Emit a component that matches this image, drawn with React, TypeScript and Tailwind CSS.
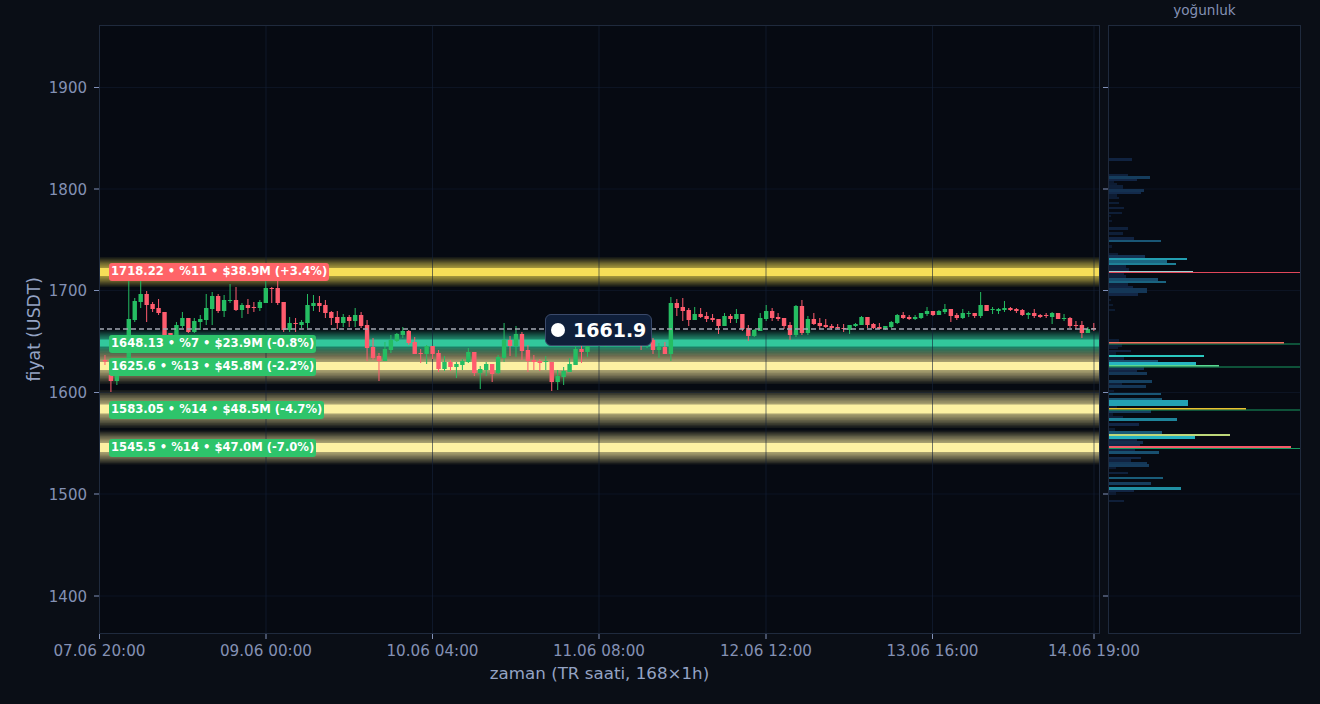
const PLOT_BG = "#060a12";
const GRID = "#14223a";

// every price/time value below is already in page pixels, svg viewBoxes use page coords
const yTicks = [
  { y: 87.5, label: "1900" },
  { y: 189, label: "1800" },
  { y: 290.5, label: "1700" },
  { y: 392.5, label: "1600" },
  { y: 494, label: "1500" },
  { y: 596, label: "1400" },
];

const xTicks = [
  { x: 99.5, label: "07.06 20:00" },
  { x: 266, label: "09.06 00:00" },
  { x: 432.5, label: "10.06 04:00" },
  { x: 599, label: "11.06 08:00" },
  { x: 766, label: "12.06 12:00" },
  { x: 932.5, label: "13.06 16:00" },
  { x: 1094, label: "14.06 19:00" },
];

const bands = [
  { y: 272, core: 4, glow: 15, color: "#f6de58" },
  { y: 343, core: 3.5, glow: 13, color: "#32c79c" },
  { y: 366, core: 4, glow: 18, color: "#fdf1a2" },
  { y: 409, core: 4.5, glow: 19, color: "#fdf1a2" },
  { y: 447.5, core: 4.5, glow: 17, color: "#fdf1a2" },
];

const levelTags = [
  { text: "1718.22 • %11 • $38.9M (+3.4%)", cls: "top-[238px] bg-[#ff6468]" },
  { text: "1648.13 • %7 • $23.9M (-0.8%)", cls: "top-[310px] bg-[#2ec46b]" },
  { text: "1625.6 • %13 • $45.8M (-2.2%)", cls: "top-[333px] bg-[#2ec46b]" },
  { text: "1583.05 • %14 • $48.5M (-4.7%)", cls: "top-[376px] bg-[#2ec46b]" },
  { text: "1545.5 • %14 • $47.0M (-7.0%)", cls: "top-[414px] bg-[#2ec46b]" },
];

// bodyTop, bodyBottom, wickTop, wickBottom, up (1 = green), index starts at 1
const candles: number[][] = [
  [360, 361.5, 355, 365, 0], [375, 381, 375, 392, 0], [375, 381, 375, 385, 1], [360, 372, 358, 374, 0],
  [319, 358, 278, 358, 1], [301, 320, 298, 322, 1], [294, 302, 280, 308, 1], [294, 305, 291, 322, 0],
  [304, 309, 302, 312, 0], [308, 313, 299, 315, 0], [312, 340, 312, 342, 0], [333, 345, 333, 346, 0],
  [325, 338, 322, 345, 1], [318, 326, 312, 328, 1], [318, 332, 318, 333, 0], [321, 332, 318, 333, 1],
  [319, 322, 315, 330, 1], [308, 320, 294, 325, 1], [296, 309, 292, 325, 1], [296, 311, 294, 313, 0],
  [300, 311, 295, 317, 1], [300, 301, 284, 303, 1], [300, 310, 287, 311, 0], [305, 310, 303, 318, 1],
  [305, 308, 299, 314, 0], [307, 308, 302, 312, 0], [302, 308, 300, 311, 1], [288, 303, 280, 303, 1],
  [288, 289, 287, 303, 0], [288, 303, 280, 305, 0], [302, 330, 302, 332, 0], [323, 330, 317, 332, 1],
  [323, 324, 318, 332, 0], [322, 325, 320, 328, 1], [305, 323, 294, 328, 1], [303, 306, 295, 311, 1],
  [303, 306, 296, 312, 0], [305, 313, 300, 318, 0], [312, 318, 311, 325, 0], [317, 323, 311, 329, 0],
  [317, 323, 314, 327, 1], [317, 321, 315, 327, 0], [315, 321, 308, 327, 1], [315, 326, 312, 328, 0],
  [325, 348, 320, 361, 0], [347, 358, 338, 360, 0], [356, 361, 353, 381, 0], [349, 361, 342, 361, 1],
  [340, 350, 335, 353, 1], [334, 341, 333, 342, 1], [331, 335, 327, 338, 1], [331, 343, 330, 345, 0],
  [342, 354, 337, 354, 0], [353, 354, 349, 363, 0], [346, 354, 345, 364, 1], [346, 354, 346, 359, 0],
  [353, 369, 350, 372, 0], [362, 369, 356, 371, 1], [362, 367, 360, 371, 0], [364, 367, 362, 378, 1],
  [361, 365, 359, 370, 1], [352, 362, 348, 363, 1], [352, 373, 352, 376, 0], [369, 373, 366, 389, 1],
  [364, 370, 362, 376, 1], [364, 374, 364, 382, 0], [357, 373, 355, 374, 1], [340, 358, 323, 362, 1],
  [340, 346, 336, 356, 0], [334, 346, 326, 357, 1], [334, 351, 332, 360, 0], [350, 361, 345, 372, 0],
  [360, 362, 355, 370, 0], [361, 363, 359, 371, 0], [361, 362, 356, 370, 1], [362, 382, 362, 391, 0],
  [376, 382, 370, 390, 1], [371, 377, 367, 385, 1], [364, 372, 358, 372, 1], [349, 365, 345, 365, 1],
  [349, 352, 345, 363, 0], [345, 352, 343, 357, 1], [335, 344, 330, 345, 1], [332, 340, 328, 344, 1],
  [335, 343, 332, 347, 1], [330, 338, 326, 342, 0], [328, 336, 325, 340, 0], [330, 340, 326, 344, 1],
  [332, 340, 329, 344, 0], [330, 340, 328, 344, 1], [338, 344, 334, 350, 0], [336, 342, 332, 348, 1],
  [340, 350, 338, 354, 0], [347, 350, 343, 358, 1], [347, 354, 342, 354, 0], [303, 354, 297, 361, 1],
  [303, 308, 299, 316, 0], [307, 311, 298, 321, 0], [310, 320, 308, 326, 0], [314, 320, 307, 320, 1],
  [314, 317, 308, 318, 0], [316, 319, 312, 322, 0], [318, 320, 314, 322, 0], [319, 326, 319, 334, 0],
  [316, 326, 313, 326, 1], [316, 319, 314, 323, 0], [314, 319, 309, 323, 1], [314, 329, 314, 331, 0],
  [328, 336, 325, 341, 0], [330, 336, 329, 337, 1], [318, 331, 313, 331, 1], [311, 319, 305, 321, 1],
  [311, 318, 308, 321, 0], [317, 319, 313, 321, 0], [318, 326, 318, 329, 0], [325, 335, 322, 340, 0],
  [306, 335, 305, 337, 1], [306, 333, 300, 335, 0], [319, 333, 316, 335, 1], [319, 324, 313, 325, 0],
  [323, 326, 318, 329, 0], [325, 327, 319, 328, 0], [326, 328, 324, 330, 0], [327, 328, 324, 329, 0],
  [328, 329, 324, 332, 0], [325, 330, 325, 334, 1], [324, 326, 323, 327, 1], [317, 325, 316, 325, 1],
  [317, 325, 317, 328, 0], [324, 328, 323, 329, 0], [327, 329, 323, 329, 0], [326, 329, 326, 330, 1],
  [322, 327, 321, 328, 1], [315, 323, 314, 324, 1], [315, 318, 312, 319, 0], [317, 319, 315, 320, 0],
  [317, 319, 315, 320, 1], [313, 318, 313, 319, 1], [311, 314, 307, 316, 1], [311, 315, 311, 316, 0],
  [311, 315, 310, 315, 1], [309, 312, 304, 314, 1], [309, 316, 309, 322, 0], [315, 318, 313, 320, 0],
  [313, 318, 309, 319, 1], [313, 314, 311, 317, 1], [313, 316, 313, 318, 0], [305, 316, 292, 318, 1],
  [305, 311, 305, 311, 0], [309, 310, 307, 314, 1], [309, 311, 308, 314, 1], [308, 310, 301, 312, 1],
  [308, 310, 307, 311, 0], [309, 311, 308, 313, 0], [310, 315, 309, 316, 0], [313, 315, 312, 319, 1],
  [313, 316, 309, 318, 0], [315, 317, 314, 318, 0], [315, 316, 313, 318, 0], [313, 317, 312, 324, 1],
  [313, 319, 313, 319, 0], [318, 319, 314, 321, 1], [318, 326, 317, 328, 0], [325, 326, 321, 329, 0],
  [325, 333, 321, 338, 0], [329, 333, 327, 333, 1], [328, 329, 323, 331, 0],
];

// top, height, width
const densityBars: number[][] = [
  [158, 3, 23], [174, 2, 19], [176, 3, 41], [179, 2, 28], [181, 2, 5], [183, 2, 8], [185, 4, 14], [189, 3, 35],
  [192, 2, 32], [194, 3, 8], [197, 2, 10], [202, 2, 10], [207, 2, 15], [212, 2, 13], [215, 2, 2], [220, 2, 3],
  [227, 3, 19], [232, 3, 14], [237, 3, 25], [240, 2, 52], [245, 3, 3], [253, 2, 9], [255, 3, 36], [258, 2, 78],
  [260, 3, 58], [263, 2, 67], [265, 3, 17], [268, 3, 20], [273, 2, 15], [275, 3, 17], [278, 3, 49], [281, 2, 57],
  [283, 3, 19], [286, 2, 24], [288, 2, 38], [290, 3, 38], [293, 3, 29], [299, 2, 2], [304, 2, 4], [309, 2, 6],
  [339, 3, 10], [344, 3, 13], [347, 2, 9], [350, 2, 22], [352, 3, 7], [355, 2, 95], [357, 3, 15], [360, 2, 49],
  [362, 3, 87], [367, 3, 35], [370, 2, 28], [372, 3, 38], [380, 3, 43], [383, 2, 13], [385, 3, 37], [390, 2, 5],
  [393, 2, 52], [398, 2, 53], [400, 6, 79], [406, 2, 8], [410, 3, 42], [413, 3, 4], [416, 2, 14], [418, 3, 68],
  [423, 3, 30], [428, 3, 6], [431, 3, 53], [436, 3, 86], [439, 2, 28], [441, 3, 34], [444, 2, 31], [449, 2, 26],
  [451, 3, 50], [457, 2, 32], [459, 3, 22], [462, 2, 38], [464, 3, 40], [467, 2, 7], [472, 2, 19], [477, 2, 54],
  [482, 3, 42], [487, 3, 72], [490, 2, 25], [492, 3, 7], [500, 2, 15],
];

// level markers in the density panel: top, height, width, colour
const densityLines: [number, number, number, string][] = [
  [343.5, 1, 191, "#169a60"],
  [366.5, 1, 191, "#169a60"],
  [409.5, 1, 191, "#169a60"],
  [448, 1, 191, "#169a60"],
  [271, 1.2, 84, "#9fd0d0"],
  [272, 1, 191, "#e0475a"],
  [342, 1.5, 175, "#f5705f"],
  [365, 1.5, 110, "#5ad890"],
  [408, 1.5, 137, "#e8c230"],
  [434, 2, 121, "#bdd77a"],
  [446, 2, 182, "#f45a68"],
];

const densityStops: [number, number[]][] = [
  [0, [11, 24, 44]],
  [30, [18, 38, 70]],
  [50, [24, 80, 112]],
  [70, [31, 138, 159]],
  [85, [37, 176, 192]],
  [100, [45, 212, 191]],
];

function densityColor(w: number) {
  for (let i = 1; i < densityStops.length; i++) {
    const [w1, c1] = densityStops[i];
    if (w <= w1) {
      const [w0, c0] = densityStops[i - 1];
      const t = (w - w0) / (w1 - w0);
      return `rgb(${c0.map((v, k) => Math.round(v + (c1[k] - v) * t)).join(",")})`;
    }
  }
  return "rgb(45,212,191)";
}

function Band({ y, core, glow, color }: { y: number; core: number; glow: number; color: string }) {
  const steps = 9;
  return (
    <g fill={color}>
      {Array.from({ length: steps }, (_, k) => {
        const half = glow - ((glow - core) * k) / steps;
        return <rect key={k} x={99} y={y - half} width={1000} height={half * 2} opacity={0.07 + 0.01 * k} />;
      })}
      <rect x={99} y={y - core} width={1000} height={core * 2} />
    </g>
  );
}

function PriceChart() {
  return (
    <svg viewBox="99 25 1001 609" className="absolute inset-0 h-full w-full overflow-visible">
      {bands.map((b) => (
        <Band key={b.y} {...b} />
      ))}
      {yTicks.map((t) => (
        <g key={t.label}>
          <line x1={99} x2={1099} y1={t.y} y2={t.y} stroke={GRID} strokeOpacity={0.45} />
          <line x1={94} x2={99} y1={t.y} y2={t.y} stroke="#8090b8" />
          <text x={87} y={t.y + 5.5} textAnchor="end" fontSize={15} fill="#8491b4">
            {t.label}
          </text>
        </g>
      ))}
      {xTicks.map((t) => (
        <g key={t.label}>
          <line x1={t.x} x2={t.x} y1={25} y2={634} stroke={GRID} strokeOpacity={0.6} />
          <line x1={t.x} x2={t.x} y1={634} y2={639} stroke="#8090b8" />
          <text x={t.x} y={656} textAnchor="middle" fontSize={15.2} fill="#8491b4">
            {t.label}
          </text>
        </g>
      ))}
      {candles.map(([top, bottom, wickTop, wickBottom, up], i) => {
        const x = 99 + (i + 1) * 5.957;
        const fill = up ? "#25bd62" : "#ff5c6e";
        return (
          <g key={i} fill={fill}>
            <rect x={x - 0.5} y={wickTop} width={1} height={wickBottom - wickTop} />
            <rect x={x - 2.2} y={top} width={4.4} height={bottom - top} />
          </g>
        );
      })}
      <line x1={99} x2={1099} y1={329} y2={329} stroke="#a3a8b2" strokeWidth={1.6} strokeDasharray="5 3" />
      <rect x={99.5} y={25.5} width={1000} height={608} fill="none" stroke="#1f2a3d" />
    </svg>
  );
}

function DensityChart() {
  return (
    <svg viewBox="1108 25 193 609" className="absolute inset-0 h-full w-full overflow-visible">
      {yTicks.map((t) => (
        <g key={t.label}>
          <line x1={1108} x2={1300} y1={t.y} y2={t.y} stroke={GRID} strokeOpacity={0.45} />
          <line x1={1103} x2={1108} y1={t.y} y2={t.y} stroke="#8090b8" />
        </g>
      ))}
      {densityBars.map(([top, h, w]) => (
        <rect key={top} x={1109} y={top} width={w} height={h} fill={densityColor(w)} />
      ))}
      {densityLines.map(([top, h, w, color]) => (
        <rect key={top} x={1109} y={top} width={w} height={h} fill={color} />
      ))}
      <rect x={1108.5} y={25.5} width={192} height={608} fill="none" stroke="#1f2a3d" />
    </svg>
  );
}

export default function App() {
  return (
    <div
      className="grid h-[704px] w-[1320px] grid-cols-[99px_1001px_8px_193px_19px] grid-rows-[25px_609px_70px] overflow-hidden bg-[#0a0e16]"
      style={{ fontFamily: '"DejaVu Sans", sans-serif' }}
    >
      <div className="col-start-4 row-start-1 text-center text-[13.6px] leading-[21px] text-[#8491b4]">
        yoğunluk
      </div>

      <div className="col-start-1 row-start-2 flex items-center pl-[25px]">
        <span className="text-[17.2px] leading-[18px] whitespace-nowrap text-[#94a3c4] [writing-mode:vertical-rl] rotate-180">
          fiyat (USDT)
        </span>
      </div>

      <div className="relative col-start-2 row-start-2" style={{ backgroundColor: PLOT_BG }}>
        <PriceChart />
        {levelTags.map((t) => (
          <div
            key={t.text}
            className={`absolute left-[10px] flex h-[18px] items-center rounded-[3px] px-[2px] text-[11.6px] font-bold whitespace-nowrap text-white ${t.cls}`}
          >
            {t.text}
          </div>
        ))}
        <div className="absolute top-[289px] left-[446px] flex h-[32px] items-center gap-[8px] rounded-[6px] border-[1.5px] border-[#3a4a6b] bg-[#0f1f3a] pr-[5px] pl-[5px] text-[19px] font-bold text-white">
          <span className="h-[14px] w-[14px] rounded-full bg-white" />
          <span>1661.9</span>
        </div>
      </div>

      <div className="relative col-start-4 row-start-2" style={{ backgroundColor: PLOT_BG }}>
        <DensityChart />
      </div>

      <div className="col-start-2 row-start-3 pt-[29px] text-center text-[16.7px] leading-[20px] text-[#94a3c4]">
        zaman (TR saati, 168×1h)
      </div>
    </div>
  );
}
